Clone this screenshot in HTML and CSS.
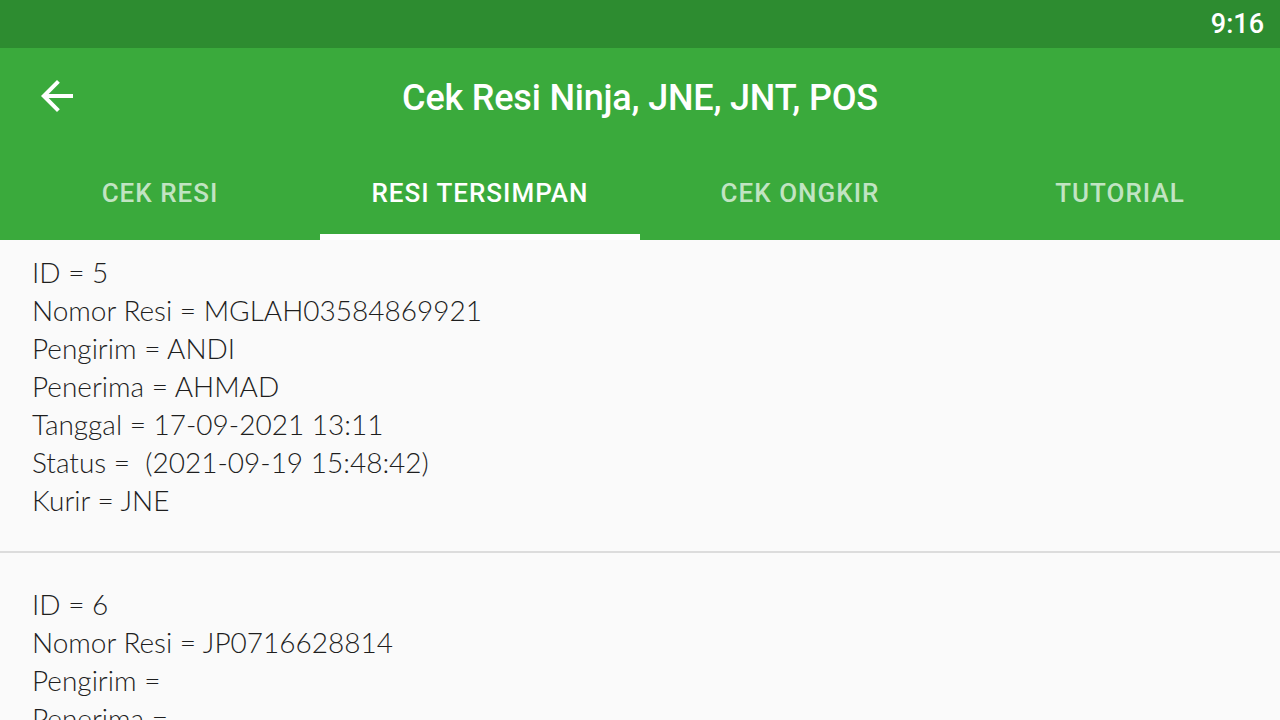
FILE: index.html
```html
<!DOCTYPE html>
<html>
<head>
<meta charset="utf-8">
<link rel="stylesheet" href="styles.css">
</head>
<body>
<div class="status-bar"><span class="time">9:16</span></div>
<header class="appbar">
  <div class="toolbar">
    <button class="back" aria-label="Back">
      <svg width="48" height="48" viewBox="0 0 24 24"><path fill="#fff" d="M20 11H7.83l5.59-5.59L12 4l-8 8 8 8 1.41-1.41L7.83 13H20v-2z"/></svg>
    </button>
    <h1 class="title">Cek Resi Ninja, JNE, JNT, POS</h1>
  </div>
  <nav class="tabs">
    <div class="tab">CEK RESI</div>
    <div class="tab active">RESI TERSIMPAN</div>
    <div class="tab">CEK ONGKIR</div>
    <div class="tab">TUTORIAL</div>
  </nav>
</header>
<main class="list">
  <div class="item">
    <div class="line">ID = 5</div>
    <div class="line">Nomor Resi = MGLAH03584869921</div>
    <div class="line">Pengirim = ANDI</div>
    <div class="line">Penerima = AHMAD</div>
    <div class="line">Tanggal = 17-09-2021 13:11</div>
    <div class="line">Status = &nbsp;(2021-09-19 15:48:42)</div>
    <div class="line">Kurir = JNE</div>
  </div>
  <div class="item">
    <div class="line">ID = 6</div>
    <div class="line">Nomor Resi = JP0716628814</div>
    <div class="line">Pengirim = </div>
    <div class="line">Penerima = </div>
    <div class="line">Tanggal = </div>
  </div>
</main>
</body>
</html>
```
FILE: styles.css
```css
html, body {
  margin: 0;
  padding: 0;
  width: 1280px;
  height: 720px;
  overflow: hidden;
  background: #fafafa;
}
.status-bar {
  height: 48px;
  background: #2d8c30;
  display: flex;
  align-items: center;
  justify-content: flex-end;
  padding-right: 16px;
}
.time {
  font-family: Roboto, sans-serif;
  font-weight: 500;
  font-size: 27px;
  color: #fff;
}
.appbar {
  background: #3aaa3c;
}
.toolbar {
  height: 96px;
  display: flex;
  align-items: center;
}
.back {
  margin-left: 33px;
  width: 48px;
  height: 48px;
  padding: 0;
  border: 0;
  background: none;
  display: flex;
}
.title {
  flex: 1;
  margin: 0 81px 0 0;
  text-align: center;
  font-family: Roboto, sans-serif;
  font-weight: 500;
  font-size: 36px;
  letter-spacing: -0.2px;
  color: #fff;
  padding-top: 3px;
}
.tabs {
  height: 96px;
  display: grid;
  grid-template-columns: repeat(4, 1fr);
}
.tab {
  display: flex;
  align-items: center;
  justify-content: center;
  font-family: Roboto, sans-serif;
  font-weight: 500;
  font-size: 26px;
  letter-spacing: 1px;
  color: rgba(255,255,255,0.7);
  border-bottom: 6px solid transparent;
  padding-top: 8px;
}
.tab.active {
  color: #fff;
  border-bottom-color: #fff;
}
.list {
  font-family: Lato, sans-serif;
  font-weight: 300;
  font-size: 28px;
  color: #1e1e1e;
}
.item {
  padding: 32px 32px 32px;
  border-bottom: 2px solid #dcdcdc;
}
.item:first-child {
  padding-top: 13px;
}
.line {
  line-height: 38px;
  height: 38px;
  white-space: pre;
}
```
